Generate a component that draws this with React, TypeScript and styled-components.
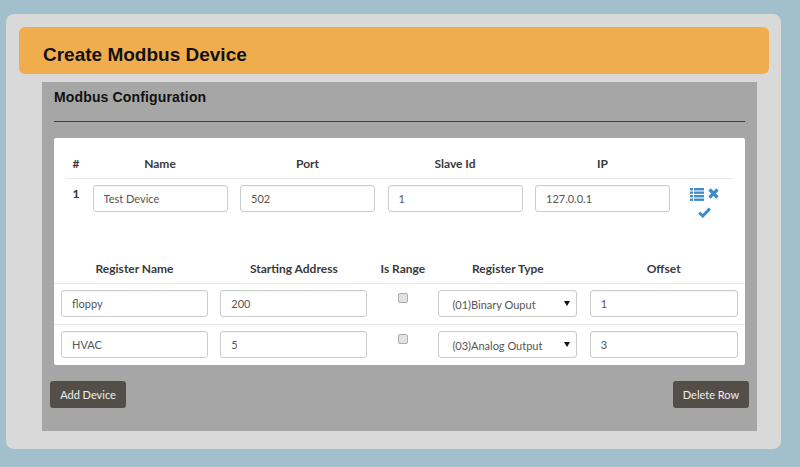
import React from "react"
import styled, { createGlobalStyle } from "styled-components"

const GlobalStyle = createGlobalStyle`
  html, body {
    margin: 0;
    padding: 0;
    background: #a2c0cc;
  }
  body {
    font-family: Lato, "Open Sans", sans-serif;
    color: #333;
  }
`

const Panel = styled.div`
  box-sizing: border-box;
  width: 775px;
  height: 435px;
  margin: 14px 0 18px 6px;
  padding: 13px 12px 0 13px;
  background: #d9d9d9;
  border-radius: 8px;
`

const Banner = styled.div`
  box-sizing: border-box;
  height: 47px;
  padding: 9px 24px 0;
  display: flex;
  align-items: center;
  background: #f0ad4e;
  border-radius: 6px;
`

const BannerTitle = styled.h1`
  margin: 0;
  font: bold 19px "Liberation Sans", Arial, sans-serif;
  color: #111;
`

const Section = styled.div`
  box-sizing: border-box;
  height: 349px;
  margin: 8px 12px 0 23px;
  padding: 7px 12px 0;
  background: #a6a6a6;
`

const SectionTitle = styled.h2`
  margin: 0;
  font: bold 14px/16px "Liberation Sans", Arial, sans-serif;
  letter-spacing: 0.15px;
  color: #111;
`

const Rule = styled.hr`
  margin: 16px 0 16px;
  border: 0;
  border-top: 1px solid #3f3f3f;
`

const Card = styled.div`
  box-sizing: border-box;
  height: 227px;
  padding-top: 12px;
  background: #fff;
  border-radius: 2px;
`

const DeviceHead = styled.div`
  display: grid;
  grid-template-columns: 14px 135px 135px 135px 135px;
  column-gap: 12.5px;
  box-sizing: border-box;
  height: 29px;
  margin: 0 12px;
  padding-bottom: 2px;
  border-bottom: 1px solid #e8e8e8;
  align-items: center;
`

const DeviceRow = styled.div`
  display: grid;
  grid-template-columns: 14px 135px 135px 135px 135px 46px;
  column-gap: 12.5px;
  margin: 6px 12px 0;
`

const HeadCell = styled.div<{ $index?: boolean }>`
  padding-left: ${props => (props.$index ? "6px" : "0")};
  font-size: 12px;
  font-weight: 700;
  text-align: center;
  white-space: nowrap;
  color: #3a3a3a;
`

const RowIndex = styled.div`
  padding: 1px 0 0 6px;
  font-size: 12px;
  font-weight: 700;
  line-height: 16px;
  text-align: center;
  color: #333;
`

const Field = styled.input`
  box-sizing: border-box;
  width: 100%;
  height: 27px;
  padding: 0 10px;
  font: 11px Lato, "Open Sans", sans-serif;
  color: #555;
  background: #fff;
  border: 1px solid #ccc;
  border-radius: 3px;
  box-shadow: inset 0 1px 1px rgba(0, 0, 0, 0.04);
`

const Actions = styled.div`
  display: flex;
  flex-wrap: wrap;
  justify-content: center;
  gap: 6px 4px;
  width: 30px;
  margin: 3px 0 0 6.5px;
  color: #428bca;
  line-height: 0;
`

const RegisterHead = styled.div`
  display: grid;
  grid-template-columns: 147px 147px 46.5px 139px 148px;
  column-gap: 12.3px;
  box-sizing: border-box;
  height: 29px;
  margin-top: 37px;
  padding: 0 7px 2px;
  align-items: center;
  border-bottom: 1px solid #e8e8e8;
`

const RegisterRow = styled.div<{ $last?: boolean }>`
  display: grid;
  grid-template-columns: 147px 147px 46.5px 139px 148px;
  column-gap: 12.3px;
  height: 41px;
  padding: 6px 7px 0;
  box-sizing: border-box;
  border-bottom: ${props => (props.$last ? "0" : "1px solid #e8e8e8")};
`

const RangeCell = styled.div`
  display: flex;
  justify-content: center;
`

const RangeBox = styled.input`
  box-sizing: border-box;
  width: 10px;
  height: 10px;
  margin: 3px 0 0;
  appearance: none;
  background: #e2e2e2;
  border: 1px solid #adadad;
  border-radius: 2px;
`

const SelectWrap = styled.div`
  position: relative;
  &::after {
    content: "";
    position: absolute;
    right: 7px;
    top: 11px;
    border-left: 3px solid transparent;
    border-right: 3px solid transparent;
    border-top: 5px solid #111;
  }
`

const Select = styled.select`
  box-sizing: border-box;
  width: 100%;
  height: 27px;
  padding: 1px 20px 0 13px;
  font: 11px Lato, "Open Sans", sans-serif;
  color: #555;
  background: #fff;
  border: 1px solid #ccc;
  border-radius: 3px;
  appearance: none;
`

const Footer = styled.div`
  display: flex;
  justify-content: space-between;
  margin: 16px -4px 0;
`

const Button = styled.button`
  box-sizing: border-box;
  height: 27px;
  width: 76px;
  padding: 0;
  font: 11px Lato, "Open Sans", sans-serif;
  color: #eee;
  background: #544e48;
  border: 0;
  border-radius: 3px;
`

const ListIcon = () => (
  <svg width="14" height="13" viewBox="0 0 14 13" fill="currentColor">
    <rect x="0" y="0" width="3" height="2.4" />
    <rect x="4" y="0" width="10" height="2.4" />
    <rect x="0" y="3.5" width="3" height="2.4" />
    <rect x="4" y="3.5" width="10" height="2.4" />
    <rect x="0" y="7" width="3" height="2.4" />
    <rect x="4" y="7" width="10" height="2.4" />
    <rect x="0" y="10.5" width="3" height="2.4" />
    <rect x="4" y="10.5" width="10" height="2.4" />
  </svg>
)

const RemoveIcon = () => (
  <svg width="11" height="11" viewBox="0 0 11 11">
    <path d="M1.5 1.5 L9.5 9.5 M9.5 1.5 L1.5 9.5" stroke="currentColor" strokeWidth="3.2" />
  </svg>
)

const OkIcon = () => (
  <svg width="13" height="11" viewBox="0 0 13 11">
    <path d="M1.2 5.6 L4.8 9 L11.8 1.6" fill="none" stroke="currentColor" strokeWidth="3" />
  </svg>
)

const registers = [
  { name: "floppy", address: "200", type: "(01)Binary Ouput", offset: "1" },
  { name: "HVAC", address: "5", type: "(03)Analog Output", offset: "3" },
]

export default function App() {
  return (
    <>
      <GlobalStyle />
      <Panel>
        <Banner>
          <BannerTitle>Create Modbus Device</BannerTitle>
        </Banner>
        <Section>
          <SectionTitle>Modbus Configuration</SectionTitle>
          <Rule />
          <Card>
            <DeviceHead>
              <HeadCell $index>#</HeadCell>
              <HeadCell>Name</HeadCell>
              <HeadCell>Port</HeadCell>
              <HeadCell>Slave Id</HeadCell>
              <HeadCell>IP</HeadCell>
            </DeviceHead>
            <DeviceRow>
              <RowIndex>1</RowIndex>
              <Field defaultValue="Test Device" />
              <Field defaultValue="502" />
              <Field defaultValue="1" />
              <Field defaultValue="127.0.0.1" />
              <Actions>
                <ListIcon />
                <RemoveIcon />
                <OkIcon />
              </Actions>
            </DeviceRow>
            <RegisterHead>
              <HeadCell>Register Name</HeadCell>
              <HeadCell>Starting Address</HeadCell>
              <HeadCell>Is Range</HeadCell>
              <HeadCell>Register Type</HeadCell>
              <HeadCell>Offset</HeadCell>
            </RegisterHead>
            {registers.map((reg, i) => (
              <RegisterRow key={reg.name} $last={i === registers.length - 1}>
                <Field defaultValue={reg.name} />
                <Field defaultValue={reg.address} />
                <RangeCell>
                  <RangeBox type="checkbox" />
                </RangeCell>
                <SelectWrap>
                  <Select defaultValue={reg.type}>
                    <option>{reg.type}</option>
                  </Select>
                </SelectWrap>
                <Field defaultValue={reg.offset} />
              </RegisterRow>
            ))}
          </Card>
          <Footer>
            <Button>Add Device</Button>
            <Button>Delete Row</Button>
          </Footer>
        </Section>
      </Panel>
    </>
  )
}
